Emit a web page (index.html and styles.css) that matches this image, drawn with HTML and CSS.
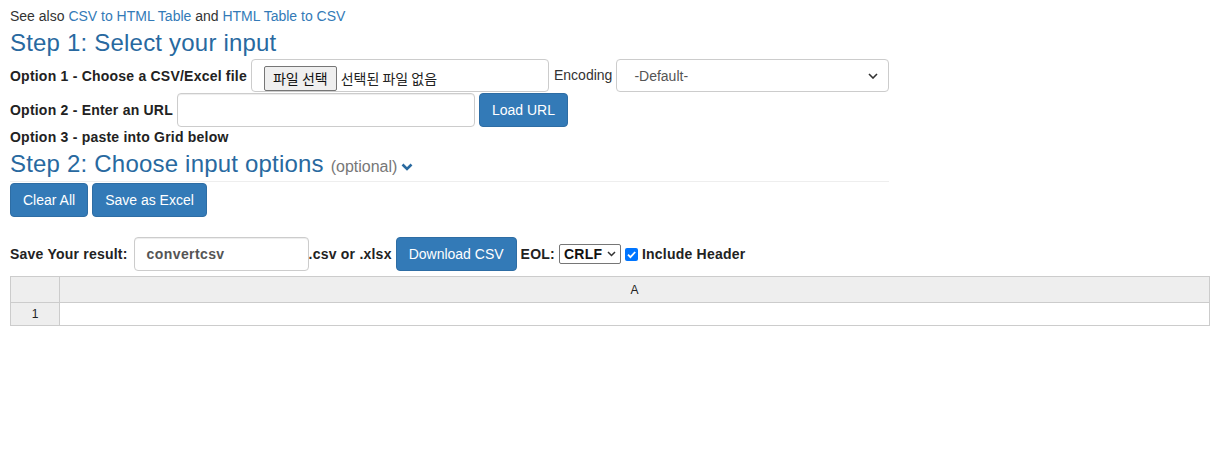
FILE: index.html
```html
<!DOCTYPE html>
<html lang="en">
<head>
<meta charset="utf-8">
<title>Convert CSV</title>
<link rel="stylesheet" href="styles.css">
</head>
<body>
<div class="page">
  <div class="see-also">See also <a href="#">CSV to HTML Table</a> and <a href="#">HTML Table to CSV</a></div>

  <section class="panel">
    <h2 class="step">Step 1: Select your input</h2>

    <div class="row row-file">
      <label class="opt">Option 1 - Choose a CSV/Excel file</label>
      <div class="file-box">
        <span class="file-btn">파일 선택</span>
        <span class="file-none">선택된 파일 없음</span>
      </div>
      <label class="enc-label">Encoding</label>
      <div class="select-box">
        <span>-Default-</span>
        <svg class="caret" width="10" height="6" viewBox="0 0 10 6"><path d="M1 1l4 4 4-4" fill="none" stroke="#333" stroke-width="1.6"/></svg>
      </div>
    </div>

    <div class="row row-url">
      <label class="opt">Option 2 - Enter an URL</label>
      <div class="text-box url-box"></div>
      <button class="btn">Load URL</button>
    </div>

    <div class="opt opt3">Option 3 - paste into Grid below</div>

    <h2 class="step step2">Step 2: Choose input options <small class="muted">(optional)</small><svg class="chev" width="12" height="10" viewBox="0 0 12 10"><path d="M1.5 2.5l4.5 4.5 4.5-4.5" fill="none" stroke="#2a6aa0" stroke-width="2.6"/></svg></h2>
    <div class="rule"></div>

    <div class="row row-actions">
      <button class="btn">Clear All</button>
      <button class="btn">Save as Excel</button>
    </div>
  </section>

  <div class="row row-save">
    <label class="opt">Save Your result:</label>
    <div class="text-box name-box">convertcsv</div>
    <span class="opt ext">.csv or .xlsx</span>
    <button class="btn btn-dl">Download CSV</button>
    <label class="opt eol">EOL:</label>
    <div class="mini-select">CRLF<svg width="9" height="6" viewBox="0 0 9 6"><path d="M1 1l3.5 3.5L8 1" fill="none" stroke="#333" stroke-width="1.5"/></svg></div>
    <span class="check"><svg width="13" height="13" viewBox="0 0 13 13"><rect x="0" y="0" width="13" height="13" rx="2" fill="#0075ff"/><path d="M3 6.7l2.4 2.4L10.2 4" fill="none" stroke="#fff" stroke-width="1.8"/></svg></span>
    <label class="opt">Include Header</label>
  </div>

  <div class="grid">
    <div class="grid-row grid-head">
      <div class="cell corner"></div>
      <div class="cell col">A</div>
    </div>
    <div class="grid-row">
      <div class="cell rownum">1</div>
      <div class="cell data"></div>
    </div>
  </div>
</div>
</body>
</html>
```

FILE: styles.css
```css
* { box-sizing: border-box; }

html, body {
  margin: 0;
  padding: 0;
  background: #fff;
}

body {
  font-family: "Liberation Sans", Arial, Helvetica, sans-serif;
  font-size: 14px;
  color: #333;
}

.page {
  padding: 6px 10px 0 10px;
}

.see-also {
  line-height: 20px;
}

.see-also a {
  color: #337ab7;
  text-decoration: none;
}

.panel {
  width: 879px;
}

.step {
  margin: 2px 0 0 0;
  font-size: 24px;
  font-weight: normal;
  line-height: 30px;
  letter-spacing: 0.2px;
  color: #2869a0;
}

.row {
  display: flex;
  align-items: center;
}

.opt {
  font-weight: bold;
  color: #222;
  font-size: 14px;
  letter-spacing: 0.22px;
}

.row-file {
  margin-top: 1px;
  height: 33px;
}

.row-file .opt {
  margin-right: 4px;
}

.file-box {
  width: 298px;
  height: 33px;
  border: 1px solid #ccc;
  border-radius: 4px;
  display: flex;
  align-items: center;
  padding-left: 12px;
  font-family: "Noto Sans CJK KR", "Liberation Sans", sans-serif;
  font-size: 14px;
  color: #222;
}

.file-btn {
  display: inline-flex;
  align-items: center;
  height: 25px;
  margin-top: 5px;
  padding: 0 8px;
  border: 1px solid #767676;
  border-radius: 2px;
  background: #efefef;
  color: #111;
  margin-right: 4px;
}

.file-none {
  margin-top: 5px;
}

.enc-label {
  margin-left: 5px;
  margin-right: 4px;
  color: #333;
  margin-top: -2px;
}

.select-box {
  flex: 1;
  height: 33px;
  border: 1px solid #ccc;
  border-radius: 4px;
  display: flex;
  align-items: center;
  justify-content: space-between;
  padding: 0 10px 0 17px;
  color: #555;
}

.row-url {
  margin-top: 1px;
  height: 33px;
}

.row-url .opt {
  margin-right: 4px;
}

.text-box {
  height: 34px;
  border: 1px solid #ccc;
  border-radius: 4px;
  box-shadow: inset 0 1px 1px rgba(0, 0, 0, .075);
}

.url-box {
  width: 298px;
  margin-right: 4px;
}

.btn {
  height: 34px;
  padding: 0 12px;
  border: 1px solid #2e6da4;
  border-radius: 4px;
  background: #337ab7;
  color: #fff;
  font-family: "Liberation Sans", Arial, sans-serif;
  font-size: 14px;
  cursor: pointer;
}

.opt3 {
  display: block;
  line-height: 20px;
  margin-top: 1px;
}

.step2 {
  margin-top: 4px;
  line-height: 26px;
}

.muted {
  font-size: 16px;
  color: #777;
  letter-spacing: 0;
}

.chev {
  margin-left: 4px;
}

.rule {
  border-top: 1px solid #eee;
  margin-top: 1px;
}

.row-actions {
  margin-top: 1px;
  gap: 4px;
}

.row-save {
  margin-top: 20px;
  height: 34px;
}

.row-save .opt {
  white-space: nowrap;
}

.name-box {
  width: 175px;
  margin-left: 6px;
  display: flex;
  align-items: center;
  padding-left: 12px;
  font-weight: bold;
  color: #555;
  letter-spacing: 0.4px;
}

.ext {
  margin-right: 4px;
}

.btn-dl {
  margin-right: 4px;
}

.eol {
  margin-right: 4px;
}

.mini-select {
  height: 20px;
  width: 62px;
  border: 1px solid #767676;
  border-radius: 2px;
  display: flex;
  align-items: center;
  justify-content: space-between;
  padding: 0 4px 0 4px;
  font-weight: bold;
  color: #111;
  letter-spacing: 0.3px;
}

.check {
  display: inline-flex;
  margin: 0 4px 0 4px;
}

.grid {
  margin-top: 5px;
  width: 1200px;
  border: 1px solid #ccc;
  font-size: 12px;
  color: #222;
}

.grid-row {
  display: flex;
}

.grid-head {
  height: 26px;
  background: #eee;
  border-bottom: 1px solid #ccc;
}

.grid-row + .grid-row {
  height: 22px;
}

.cell {
  display: flex;
  align-items: center;
  justify-content: center;
}

.corner, .rownum {
  width: 49px;
  border-right: 1px solid #ccc;
}

.rownum {
  background: #eee;
}

.col, .data {
  flex: 1;
}
```
